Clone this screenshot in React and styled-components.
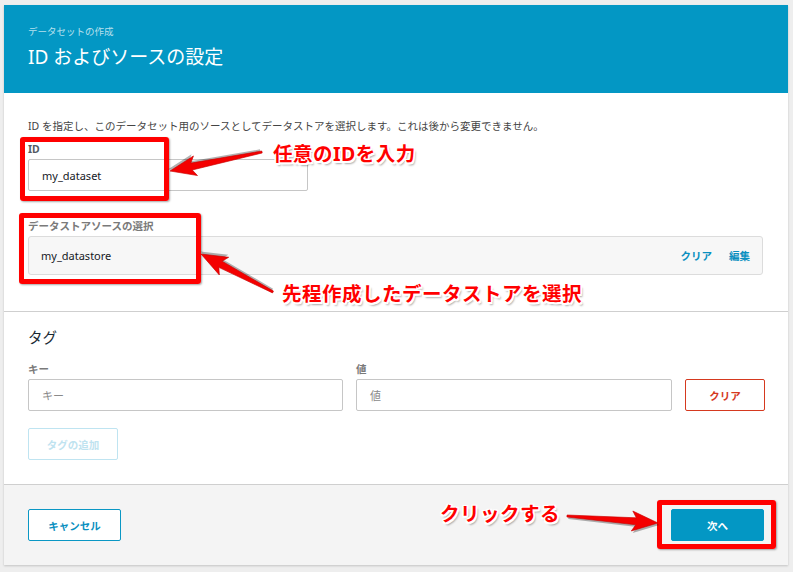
import React from 'react'
import styled, { createGlobalStyle } from 'styled-components'

const GlobalStyle = createGlobalStyle`
  html, body {
    margin: 0;
    padding: 0;
    background: #eeeeee;
  }
  body {
    font-family: "Noto Sans", "Noto Sans CJK JP", sans-serif;
    color: #16191f;
  }
`

const blue = '#0397c4'

const Page = styled.div`
  position: relative;
  width: 793px;
  height: 572px;
  overflow: hidden;
  padding: 5px 5px 0 4px;
  box-sizing: border-box;
`

const Card = styled.div`
  width: 784px;
  background: #fff;
  box-shadow: 0 1px 2px rgba(0, 0, 0, 0.18);
  display: flex;
  flex-direction: column;
`

const Header = styled.header`
  background: ${blue};
  height: 88px;
  padding: 21px 24px 0;
  box-sizing: border-box;
  color: #fff;
`

const Crumb = styled.div`
  font-size: 9.5px;
  line-height: 12px;
  color: rgba(255, 255, 255, 0.72);
`

const Title = styled.h1`
  margin: 7px 0 0;
  font-size: 19px;
  line-height: 24px;
  font-weight: 400;
`

const Section = styled.section`
  padding: ${(p) => p.$pad};
  border-bottom: 1px solid #cfcfcf;
  display: flex;
  flex-direction: column;
`

const Description = styled.p`
  margin: 0;
  font-size: 10.5px;
  line-height: 16px;
  color: #444;
`

const Label = styled.label`
  display: block;
  font-size: 10.5px;
  line-height: 14px;
  font-weight: 700;
  color: ${(p) => (p.$muted ? '#7a7a7a' : '#545b64')};
  margin-bottom: 3px;
`

const Field = styled.div`
  margin-top: ${(p) => p.$top || 0}px;
  width: ${(p) => p.$width || 'auto'};
`

const Input = styled.div`
  height: 32px;
  box-sizing: border-box;
  border: 1px solid #c6c6c6;
  border-radius: 2px;
  padding: 0 13px;
  display: flex;
  align-items: center;
  font-size: 11px;
  color: ${(p) => (p.$placeholder ? '#8a8a8a' : '#16191f')};
  background: #fff;
`

const SourceBox = styled.div`
  height: 39px;
  box-sizing: border-box;
  border: 1px solid #dcdcdc;
  border-radius: 3px;
  background: #f7f7f7;
  display: flex;
  align-items: center;
  padding: 0 12px;
  font-size: 11px;
`

const SourceName = styled.span`
  flex: 1;
`

const LinkAction = styled.span`
  color: #0a8fbf;
  font-weight: 700;
  font-size: 10.5px;
  margin-left: 17px;
`

const SectionTitle = styled.h2`
  margin: 0;
  font-size: 14.5px;
  line-height: 20px;
  font-weight: 400;
  color: #1a2a33;
`

const TagRow = styled.div`
  display: grid;
  grid-template-columns: 315px 316px 80px;
  column-gap: 13px;
  align-items: end;
  margin-top: 15px;
`

const Button = styled.button`
  height: 32px;
  box-sizing: border-box;
  width: ${(p) => p.$width}px;
  border-radius: 2px;
  font-family: inherit;
  font-size: 10.5px;
  font-weight: 700;
  padding: 0;
  background: ${(p) => (p.$primary ? blue : '#fff')};
  color: ${(p) =>
    p.$primary ? '#fff' : p.$danger ? '#d5391f' : p.$disabled ? '#bfe3f0' : '#0a8fbf'};
  border: 1px solid
    ${(p) =>
      p.$primary ? blue : p.$danger ? '#d5391f' : p.$disabled ? '#bfe4f1' : '#0a97c4'};
`

const Footer = styled.footer`
  background: #f4f4f4;
  padding: 24px 24px 24px;
  display: flex;
  justify-content: space-between;
`

/* annotations drawn over the screenshot */

const Box = styled.div`
  position: absolute;
  border: 5px solid #ff0000;
  border-radius: 3px;
  box-shadow: 1px 1px 2px rgba(0, 0, 0, 0.35);
  pointer-events: none;
`

const Note = styled.div`
  position: absolute;
  color: #ff0000;
  font-weight: 700;
  font-size: ${(p) => p.$size || 19.5}px;
  line-height: 24px;
  white-space: nowrap;
  letter-spacing: 0.5px;
  text-shadow:
    -1.5px -1.5px 0 #fff, 1.5px -1.5px 0 #fff, -1.5px 1.5px 0 #fff,
    1.5px 1.5px 0 #fff, 0 -1.5px 0 #fff, 0 1.5px 0 #fff, -1.5px 0 0 #fff,
    1.5px 0 0 #fff, 2px 3px 2px rgba(0, 0, 0, 0.35);
`

const Overlay = styled.svg`
  position: absolute;
  left: 0;
  top: 0;
  pointer-events: none;
`

const Arrow = ({ from, to }) => {
  const dx = to[0] - from[0]
  const dy = to[1] - from[1]
  const len = Math.hypot(dx, dy)
  const ang = (Math.atan2(dy, dx) * 180) / Math.PI
  const h = len - 22
  const pts = `0,-1 ${h},-3.5 ${h - 4},-10 ${len},0 ${h - 4},10 ${h},3.5 0,1`
  return (
    <g transform={`translate(${from[0]} ${from[1]}) rotate(${ang})`}>
      <polygon points={pts} fill="rgba(0,0,0,0.3)" transform="translate(1.5 2)" />
      <polygon points={pts} fill="#f40000" stroke="#c80000" strokeWidth="0.6" />
    </g>
  )
}

export default function App() {
  return (
    <>
      <GlobalStyle />
      <Page>
        <Card>
          <Header>
            <Crumb>データセットの作成</Crumb>
            <Title>ID およびソースの設定</Title>
          </Header>

          <Section $pad="25px 25px 36px 24px">
            <Description>
              ID を指定し、このデータセット用のソースとしてデータストアを選択します。これは後から変更できません。
            </Description>
            <Field $top={8} $width="280px">
              <Label>ID</Label>
              <Input>my_dataset</Input>
            </Field>
            <Field $top={28}>
              <Label $muted>データストアソースの選択</Label>
              <SourceBox>
                <SourceName>my_datastore</SourceName>
                <LinkAction>クリア</LinkAction>
                <LinkAction>編集</LinkAction>
              </SourceBox>
            </Field>
          </Section>

          <Section $pad="15px 25px 24px 24px">
            <SectionTitle>タグ</SectionTitle>
            <TagRow>
              <Field>
                <Label $muted>キー</Label>
                <Input $placeholder>キー</Input>
              </Field>
              <Field>
                <Label $muted>値</Label>
                <Input $placeholder>値</Input>
              </Field>
              <Button $danger $width={80}>クリア</Button>
            </TagRow>
            <Field $top={17}>
              <Button $disabled $width={90}>タグの追加</Button>
            </Field>
          </Section>

          <Footer>
            <Button $width={93}>キャンセル</Button>
            <Button $primary $width={93}>次へ</Button>
          </Footer>
        </Card>

        <Box style={{ left: 20, top: 137, width: 139, height: 54 }} />
        <Box style={{ left: 19, top: 213, width: 172, height: 61 }} />
        <Box style={{ left: 657, top: 500, width: 109, height: 39 }} />

        <Overlay width="793" height="572" viewBox="0 0 793 572">
          <Arrow from={[262, 152]} to={[170, 171]} />
          <Arrow from={[273, 292]} to={[201, 254]} />
          <Arrow from={[567, 516]} to={[658, 523]} />
        </Overlay>

        <Note style={{ left: 273, top: 142 }}>任意のIDを入力</Note>
        <Note style={{ left: 282, top: 282 }}>先程作成したデータストアを選択</Note>
        <Note style={{ left: 440, top: 502 }}>クリックする</Note>
      </Page>
    </>
  )
}
